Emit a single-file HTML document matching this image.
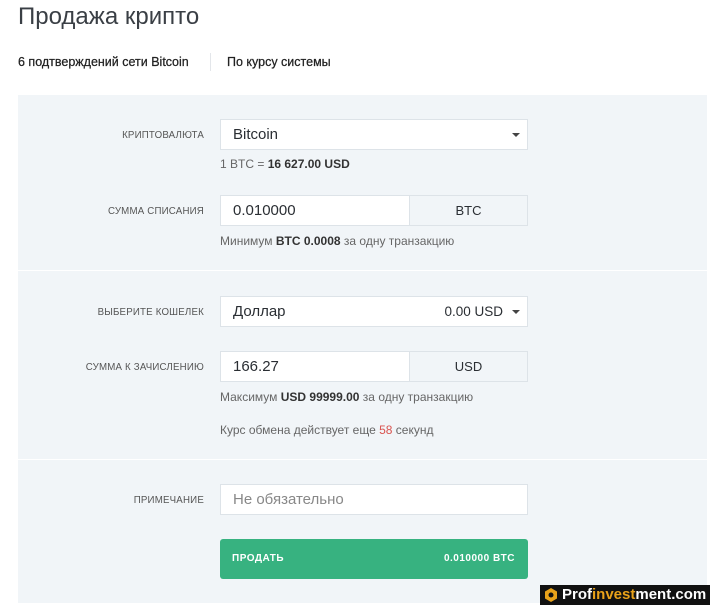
<!DOCTYPE html>
<html><head><meta charset="utf-8"><style>
*{box-sizing:border-box;margin:0;padding:0}
body{width:720px;height:614px;background:#fff;font-family:"Liberation Sans",sans-serif;color:#2f3338;position:relative;overflow:hidden}
.abs{position:absolute}
h1{position:absolute;left:18px;top:3px;font-size:24px;font-weight:normal;color:#3a3f45}
.tab{position:absolute;top:55px;font-size:12.5px;color:#222;-webkit-text-stroke:0.25px #222}
.panel{position:absolute;left:18px;top:95px;width:689px;height:508px;background:#f1f5f8}
.sep{position:absolute;left:18px;width:689px;height:1px;background:#fff}
.lbl{position:absolute;right:516px;font-size:9.7px;color:#555;text-transform:uppercase;letter-spacing:.2px}
.inp{position:absolute;left:220px;width:308px;height:31px;background:#fff;border:1px solid #dde3e8;font-size:15px;padding-left:12px;line-height:29px;color:#2a2e33}
.add{position:absolute;left:409px;width:119px;height:31px;background:#f1f5f8;border:1px solid #dde3e8;text-align:center;line-height:29px;font-size:13px;color:#2a2e33}
.caret{position:absolute;right:7px;top:13px;width:0;height:0;border-left:4px solid transparent;border-right:4px solid transparent;border-top:4px solid #444}
.hint{position:absolute;left:220px;font-size:12px;color:#666}
.hint b{color:#333;font-weight:bold}
.btn{position:absolute;left:220px;top:539px;width:308px;height:40px;background:#37b280;border-radius:3px;color:#fff;font-size:10px;font-weight:bold;letter-spacing:.5px}
</style></head><body>
<h1>Продажа крипто</h1>
<div class="tab" style="left:18px">6 подтверждений сети Bitcoin</div>
<div class="abs" style="left:210px;top:53px;width:1px;height:18px;background:#e3e6ea"></div>
<div class="tab" style="left:227px">По курсу системы</div>
<div class="panel"></div>
<div class="sep" style="top:270px"></div>
<div class="sep" style="top:459px"></div>

<div class="lbl" style="top:130px">Криптовалюта</div>
<div class="inp" style="top:119px">Bitcoin<div class="caret"></div></div>
<div class="hint" style="top:157px">1 BTC = <b>16 627.00 USD</b></div>

<div class="lbl" style="top:206px">Сумма списания</div>
<div class="inp" style="top:195px">0.010000</div>
<div class="add" style="top:195px">BTC</div>
<div class="hint" style="top:234px">Минимум <b>BTC 0.0008</b> за одну транзакцию</div>

<div class="lbl" style="top:307px">Выберите кошелек</div>
<div class="inp" style="top:296px">Доллар<span class="abs" style="right:24px;top:0;font-size:13.5px">0.00 USD</span><div class="caret"></div></div>

<div class="lbl" style="top:362px">Сумма к зачислению</div>
<div class="inp" style="top:351px">166.27</div>
<div class="add" style="top:351px">USD</div>
<div class="hint" style="top:390px">Максимум <b>USD 99999.00</b> за одну транзакцию</div>
<div class="hint" style="top:423px">Курс обмена действует еще <span style="color:#d9534f">58</span> секунд</div>

<div class="lbl" style="top:495px">Примечание</div>
<div class="inp" style="top:484px;color:#888">Не обязательно</div>

<div class="btn"><span class="abs" style="left:12px;top:14px">ПРОДАТЬ</span><span class="abs" style="right:13px;top:14px">0.010000 BTC</span></div>

<div class="abs" style="left:540px;top:585px;width:170px;height:20px;background:#111;color:#fff;font-size:15px;font-weight:bold;line-height:20px;padding-left:22px">
<svg class="abs" style="left:4px;top:3px" width="14" height="14" viewBox="0 0 14 14"><polygon points="7,0 13,3.5 13,10.5 7,14 1,10.5 1,3.5" fill="#e8a21a"/><circle cx="7" cy="7" r="2.5" fill="#111"/></svg>
Prof<span style="color:#e8a21a">invest</span>ment.com</div>
</body></html>
